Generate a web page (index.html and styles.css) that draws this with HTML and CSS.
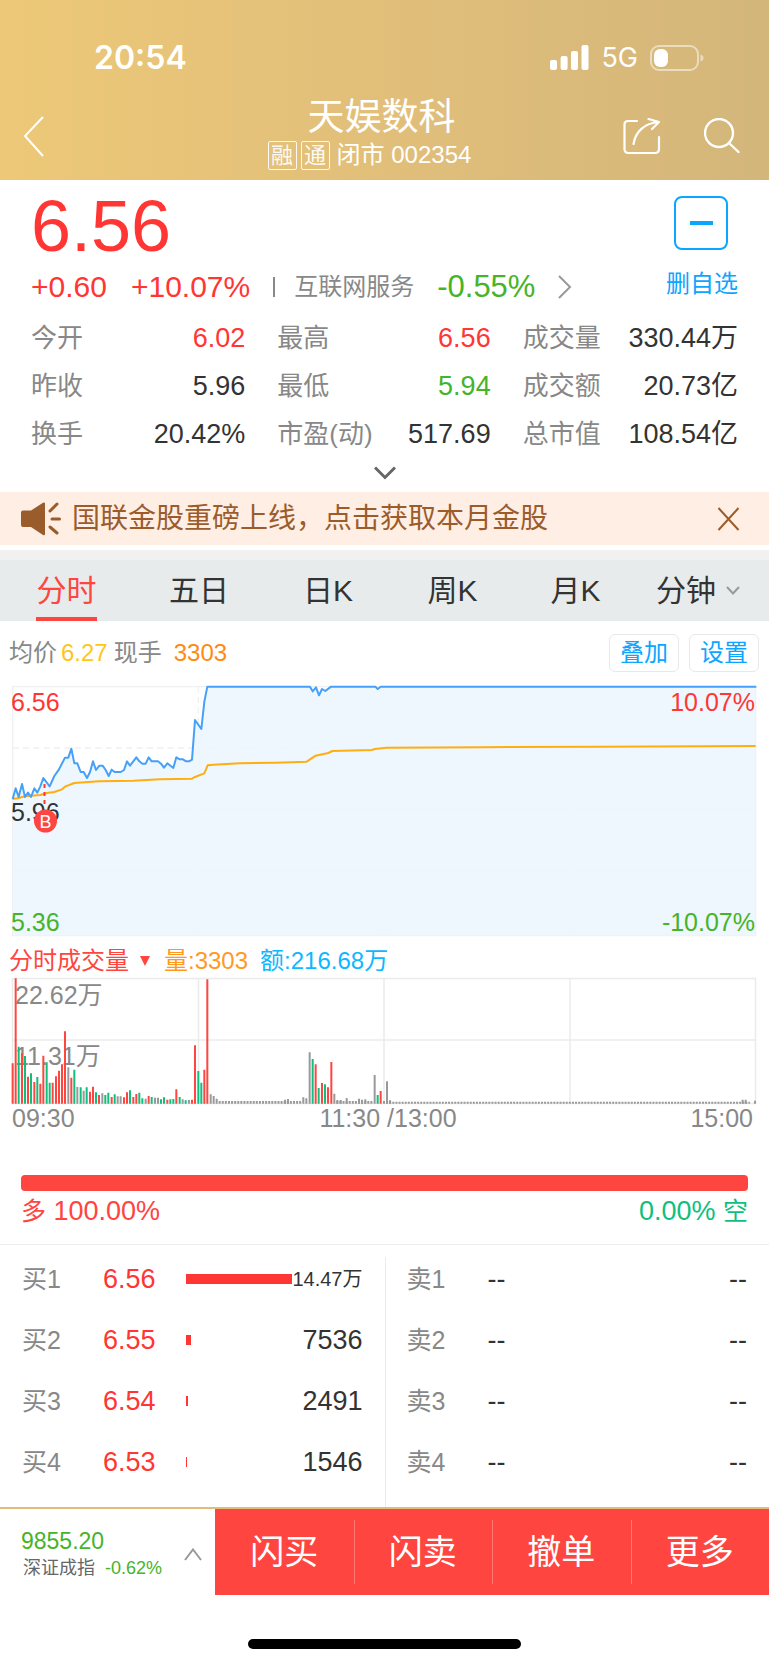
FILE: index.html
```html
<!DOCTYPE html>
<html lang="zh-CN">
<head>
<meta charset="utf-8">
<meta name="viewport" content="width=device-width, initial-scale=1">
<title>天娱数科 002354</title>
<link rel="stylesheet" href="styles.css">
</head>
<body>
<header class="header">
  <div class="status">
    <span class="clock">20:54</span>
    <div class="status-right">
      <svg class="signal" viewBox="0 0 39 25" fill="#fff"><rect y="15" width="7" height="10" rx="2"/><rect x="10.600" y="11" width="7" height="14" rx="2"/><rect x="21" y="6" width="7" height="19" rx="2"/><rect x="31.500" width="7" height="25" rx="2"/></svg>
      <span class="net">5G</span>
      <svg class="battery" viewBox="0 0 54 26"><rect x="1" y="1" width="47" height="24" rx="8" fill="none" stroke="#fff" stroke-opacity=".5" stroke-width="2"/><rect x="4" y="4" width="14" height="18" rx="6" fill="#fff"/><path d="M50.500 9.500q3 1 3 3.500t-3 3.500z" fill="#fff" fill-opacity=".5"/></svg>
    </div>
  </div>
  <div class="nav">
    <button class="icon-btn back" aria-label="返回"><svg width="22" height="42" viewBox="0 0 22 42" fill="none" stroke="#fff" stroke-width="2"><path d="M20 1 2 20l18 20"/></svg></button>
    <div class="title">
      <h1>天娱数科</h1>
      <p><span class="tag">融</span><span class="tag">通</span><span class="market">闭市 002354</span></p>
    </div>
    <div class="nav-right">
      <button class="icon-btn" aria-label="分享"><svg width="38" height="38" viewBox="0 0 38 38" fill="none" stroke="#fff" stroke-width="2.200" stroke-linecap="round" stroke-linejoin="round"><path d="M14 3H5Q1.500 3 1.500 6.500V31q0 4 4 4H32q4 0 4-4V19"/><path d="M10.500 26C12.500 14 21 5 36 4M25.500 1L36 4l-7 7"/></svg></button>
      <button class="icon-btn" aria-label="搜索"><svg width="36" height="38" viewBox="0 0 36 38" fill="none" stroke="#fff" stroke-width="2.400" stroke-linecap="round"><circle cx="15" cy="15" r="14"/><path d="M25 25l9.500 9"/></svg></button>
    </div>
  </div>
</header>

<main>
<section class="quote">
  <div class="quote-top">
    <div>
      <div class="price">6.56</div>
      <div class="change">
        <span>+0.60</span><span class="pct">+10.07%</span><i class="sep"></i>
        <a href="#sector" class="sector"><span class="sector-name">互联网服务</span><span class="down">-0.55%</span><svg width="14" height="24" viewBox="0 0 14 24" fill="none" stroke="#999" stroke-width="2"><path d="M1 1l11 11L1 23"/></svg></a>
      </div>
    </div>
    <button class="fav"><span class="fav-box"></span><span>删自选</span></button>
  </div>
  <dl class="stats">
    <div><dt>今开</dt><dd class="up">6.02</dd></div>
    <div><dt>最高</dt><dd class="up">6.56</dd></div>
    <div><dt>成交量</dt><dd>330.44万</dd></div>
    <div><dt>昨收</dt><dd>5.96</dd></div>
    <div><dt>最低</dt><dd class="down">5.94</dd></div>
    <div><dt>成交额</dt><dd>20.73亿</dd></div>
    <div><dt>换手</dt><dd>20.42%</dd></div>
    <div><dt>市盈(动)</dt><dd>517.69</dd></div>
    <div><dt>总市值</dt><dd>108.54亿</dd></div>
  </dl>
  <button class="expand" aria-label="展开"><svg width="22" height="14" viewBox="0 0 22 14" fill="none" stroke="#666" stroke-width="3"><path d="M1 1.500l10 10 10-10"/></svg></button>
</section>

<div class="banner">
  <svg width="40" height="34" viewBox="0 0 40 34"><path d="M0 10.500q0-2 2-2h8L22 .8q2-1 2 1V32q0 2-2 1L10 25H2q-2 0-2-2z" fill="#9b5c2c"/><path d="M29 9l7-7M31 17h7.500M29 25l7 6" stroke="#9b5c2c" stroke-width="3" stroke-linecap="round" fill="none"/></svg>
  <a href="#promo">国联金股重磅上线，点击获取本月金股</a>
  <button class="icon-btn" aria-label="关闭"><svg width="24" height="24" viewBox="0 0 24 24" fill="none" stroke="#9b5c2c" stroke-width="2"><path d="M1.500 1l20 22M21.500 1l-20 22"/></svg></button>
</div>

<nav class="tabs">
  <button class="active">分时</button><button>五日</button><button>日K</button><button>周K</button><button>月K</button><button class="more">分钟<svg width="14" height="9" viewBox="0 0 14 9" fill="none" stroke="#999" stroke-width="2"><path d="M1 1l6 6.500L13 1"/></svg></button>
</nav>

<div class="info">
  <span>均价</span><span class="avg">6.27</span><span>现手</span><span class="now">3303</span>
  <div class="tools"><button>叠加</button><button>设置</button></div>
</div>

<svg class="chart" viewBox="0 0 769 259" role="img" aria-label="分时走势">
  <g transform="scale(.33333)" fill="none">
    <g stroke="#f0f0f0" stroke-width="4">
      <path d="M38 20H2267V767H38z"/>
      <path d="M38 204H2267M595 20V767M1709 20V767" stroke-dasharray="18 13"/>
      <path d="M38 387H2267M38 571H2267M1152 20V767"/>
    </g>
    <path fill="#ebf5fe" fill-opacity=".85" d="M38 357L47 325 56 351 66 312 75 351 84 338 93 351 103 325 112 338 121 319 130 294 149 319 163 288 177 268 195 233H205L214 206 223 250H232L242 276H251L261 294 270 276 279 244 288 270 298 257H308L317 270 326 288 335 269 344 276H362L372 270 381 244 390 257 409 232 418 244 427 251H437L446 232 455 244H474L483 251 492 263 502 250 520 264 529 232 539 238H549L558 244H567L576 239 585 120 604 147 613 65 622 20H930L938 34 948 22 957 46 966 27 976 33 993 20H1126L1133 27 1142 20H2267V767H38z"/>
    <path stroke="#ffae12" stroke-width="6" stroke-linejoin="round" d="M38 357L56 354 75 349 121 345 140 339 163 336 186 328 195 320 223 309 298 304 400 302 480 298 576 296 585 291 613 280 623 256 640 254 720 250 830 248 920 245 947 227 985 219 997 213 1115 210 1125 207 1160 203 1450 201.500 1810 200 2267 198"/>
    <path stroke="#47a0f7" stroke-width="6" stroke-linejoin="round" d="M38 357L47 325 56 351 66 312 75 351 84 338 93 351 103 325 112 338 121 319 130 294 149 319 163 288 177 268 195 233H205L214 206 223 250H232L242 276H251L261 294 270 276 279 244 288 270 298 257H308L317 270 326 288 335 269 344 276H362L372 270 381 244 390 257 409 232 418 244 427 251H437L446 232 455 244H474L483 251 492 263 502 250 520 264 529 232 539 238H549L558 244H567L576 239 585 120 604 147 613 65 622 20H930L938 34 948 22 957 46 966 27 976 33 993 20H1126L1133 27 1142 20H2269"/>
  </g>
  <g class="labels">
    <text x="11" y="31" class="t-up">6.56</text><text x="11" y="141" class="t-dark">5.96</text><text x="11" y="251" class="t-down">5.36</text>
    <text x="755" y="31" class="t-up end">10.07%</text><text x="755" y="251" class="t-down end">-10.07%</text>
  </g>
  <path d="M44.500 104v22" stroke="#ff3633" stroke-width="2" stroke-dasharray="4 4"/>
  <circle cx="45.500" cy="141" r="11.500" fill="#ff4540"/>
  <text x="45.500" y="148" class="buy-mark">B</text>
</svg>

<div class="vol-head"><button class="vol-name">分时成交量<svg width="10" height="10" viewBox="0 0 10 10"><path d="M0 0h10L5 10z" fill="#ff4540"/></svg></button><span class="vol">量:3303</span><span class="amt">额:216.68万</span></div>

<svg class="chart" viewBox="0 0 769 160" role="img" aria-label="分时成交量">
  <path d="M12.500 4.500h743v125h-743zM12.500 66h743M198.500 4.500v125M384 4.500v125M570 4.500v125" fill="none" stroke="#ebebeb" stroke-width="1.500"/>
  <g class="labels">
    <text x="15" y="30">22.62万</text><text x="15" y="91">11.31万</text>
    <text x="12" y="153">09:30</text><text x="388" y="153" class="mid">11:30 /13:00</text><text x="753" y="153" class="end">15:00</text>
  </g>
  <g transform="translate(0 -34) scale(.33333)" fill="none" stroke-width="6">
    <path stroke="#ff4540" d="M38 491V370M47 491V115M66 491V340M84 491V410M103 491V426M121 491V431M130 491V347M158 491V428M168 491V409M177 491V392M186 491V373M195 491V274M214 491V413M270 491V455M279 491V440M297 491V465M335 491V471M372 491V472M381 491V457M400 491V471M409 491V462M446 491V468M502 491V479M529 491V448M576 491V479M585 491V316M613 491V389M622 491V118M947 491V373M966 491V429M984 491V442M994 491V366M1142 491V453"/>
    <path stroke="#10bf7d" d="M56 491V320M75 491V348M93 491V400M112 491V411M140 491V367M149 491V428M223 491V389M242 491V442M260 491V442M288 491V457M316 491V465M325 491V458M344 491V463M390 491V451M418 491V458M427 491V475M455 491V471M483 491V478M492 491V472M511 491V478M520 491V477M539 491V471M557 491V481M595 491V393M604 491V428M938 491V357M956 491V444M975 491V433M1133 491V465"/>
    <path stroke="#999" d="M205 491V382M232 491V441M251 491V452M307 491V460M353 491V469M362 491V469M437 491V476M465 491V473M474 491V473M548 491V478M567 491V480M632 491V463M641 491V468M650 491V476M855 491V479M864 491V477M910 491V472M919 491V475M929 491V337M1003 491V461M1012 491V480M1022 491V480M1040 491V474M1077 491V476M1086 491V479M1096 491V478M1124 491V405M1161 491V424M1170 491V481M2228 491V479M2237 491V479M2265 491V482"/>
    <path stroke="#999" stroke-width="8" stroke-dasharray="6 3.290" d="M656 487H905M1009 487H1118M1149 487H1176"/>
    <path stroke="#999" stroke-dasharray="6 3.290" d="M1177 488H2250"/>
  </g>
</svg>

<section class="power">
  <div class="power-bar"></div>
  <div class="power-text"><span><b>多</b> 100.00%</span><span class="short">0.00% <b>空</b></span></div>
</section>

<section class="book">
  <table>
    <tr><th scope="row">买1</th><td class="up">6.56</td><td><div class="depth"><i style="width:60%"></i><span class="small">14.47万</span></div></td></tr>
    <tr><th scope="row">买2</th><td class="up">6.55</td><td><div class="depth"><i style="width:3%"></i><span>7536</span></div></td></tr>
    <tr><th scope="row">买3</th><td class="up">6.54</td><td><div class="depth"><i style="width:1%"></i><span>2491</span></div></td></tr>
    <tr><th scope="row">买4</th><td class="up">6.53</td><td><div class="depth"><i style="width:0.6%"></i><span>1546</span></div></td></tr>
  </table>
  <table>
    <tr><th scope="row">卖1</th><td>--</td><td class="qty">--</td></tr>
    <tr><th scope="row">卖2</th><td>--</td><td class="qty">--</td></tr>
    <tr><th scope="row">卖3</th><td>--</td><td class="qty">--</td></tr>
    <tr><th scope="row">卖4</th><td>--</td><td class="qty">--</td></tr>
  </table>
</section>
</main>

<footer>
  <div class="dock">
    <button class="index">
      <span class="index-text"><span class="index-value">9855.20</span><span class="index-sub"><span>深证成指</span><span class="down">-0.62%</span></span></span>
      <svg width="18" height="13" viewBox="0 0 18 13" fill="none" stroke="#999" stroke-width="2"><path d="M1 12L9 1.500 17 12"/></svg>
    </button>
    <div class="actions"><button>闪买</button><button>闪卖</button><button>撤单</button><button>更多</button></div>
  </div>
  <div class="home"></div>
</footer>
</body>
</html>
```
FILE: styles.css
```css
* { box-sizing: border-box; }
body {
  margin: 0;
  background: #fff;
  color: #333;
  font-family: "Liberation Sans", "Noto Sans CJK SC", sans-serif;
  font-size: 24px;
  line-height: 1;
}
button { margin: 0; padding: 0; border: 0; background: none; color: inherit; font: inherit; cursor: pointer; }
a { color: inherit; text-decoration: none; }
svg { display: block; flex: none; }
.up { color: #ff3633; }
.down { color: #46b428; }
.icon-btn { display: flex; }

.header { background: linear-gradient(90deg, #edc878, #e0be7a 55%, #d3b67a); color: #fff; }
.status { display: flex; justify-content: space-between; align-items: center; height: 94px; padding: 21px 65px 0 94px; }
.clock { font: 600 32px/40px Inter, sans-serif; }
.status-right { display: flex; align-items: center; }
.signal { width: 39px; height: 25px; }
.net { margin: 0 12px; font: 400 27px/32px Inter, sans-serif; }
.battery { width: 54px; height: 26px; }
.nav { display: grid; grid-template-columns: 1fr auto 1fr; height: 86px; padding: 0 29px 0 23px; }
.back { align-self: center; }
.title { text-align: center; }
.title h1 { margin: 0; padding-top: 2px; font-size: 37px; font-weight: 400; line-height: 44px; }
.title p { display: flex; align-items: center; gap: 4px; margin: 0 24px 0 0; line-height: 30px; }
.tag { width: 29px; height: 29px; border: 1px solid #fff; border-radius: 2px; line-height: 27px; font-size: 22px; opacity: .9; }
.market { margin-left: 3px; }
.nav-right { display: flex; align-items: center; justify-content: flex-end; gap: 43px; }

.quote { padding: 11px 31px 0; }
.quote-top { display: flex; justify-content: space-between; }
.price { color: #ff3633; font-size: 72px; line-height: 72px; margin-top: -1px; }
.change { display: flex; align-items: center; margin-top: 5px; color: #ff3633; font-size: 30px; line-height: 40px; }
.pct { margin-left: 24px; }
.sep { width: 2px; height: 20px; margin: 0 19px 0 23px; background: #888; }
.sector { display: flex; align-items: center; }
.sector-name { margin-right: 23px; color: #888; font-size: 24px; }
.sector .down { font-size: 31px; }
.sector svg { margin-left: 23px; }
.fav { display: flex; flex-direction: column; align-items: flex-end; color: #0ca5ff; }
.fav-box { display: grid; place-items: center; width: 54px; height: 54px; margin: 5px 10px 22px 0; border: 2px solid #0ca5ff; border-radius: 8px; }
.fav-box::before { content: ""; width: 23px; height: 4px; background: #0ca5ff; }
.stats { display: grid; grid-template-columns: 214fr 213fr 215fr; column-gap: 32px; margin: 7px 0 0; font-size: 26px; line-height: 48px; }
.stats div { display: flex; justify-content: space-between; }
.stats dt { color: #888; white-space: nowrap; }
.stats dd { margin: 0; font-size: 27px; white-space: nowrap; }
.expand { display: flex; width: 100%; height: 34px; padding-top: 8px; justify-content: center; }

.banner { display: flex; align-items: center; height: 53px; padding: 0 28px 0 21px; background: #ffeee4; color: #9b5c2c; font-size: 28px; }
.banner a { flex: 1; margin-left: 11px; line-height: 32px; }

.tabs { display: grid; grid-template-columns: 133fr 132fr 126fr 123fr 123fr 132fr; height: 71px; margin-top: 5px; border-top: 10px solid #f1f1f1; background: #e8ebec; font-size: 30px; }
.tabs button { display: flex; align-items: center; justify-content: center; height: 61px; line-height: 61px; white-space: nowrap; }
.tabs .active { width: 61px; justify-self: center; border-bottom: 4px solid #ff4540; border-top: 4px solid transparent; color: #ff4540; }
.tabs .more { padding-right: 10px; gap: 10px; }

.info { display: flex; align-items: center; height: 59px; padding: 4px 10px 0 9px; color: #888; }
.avg { margin: 0 6px 0 4px; color: #ffc61a; }
.now { margin-left: 12px; color: #ff8a12; }
.tools { display: flex; gap: 10px; margin-left: auto; }
.tools button { width: 70px; height: 38px; border: 1px solid #e8e8e8; border-radius: 6px; color: #0ca5ff; }

.chart { width: 100%; height: auto; }
.labels { font-size: 25px; fill: #888; }
.t-up { fill: #ff3633; }
.t-down { fill: #46b428; }
.t-dark { fill: #333; }
.end { text-anchor: end; }
.mid { text-anchor: middle; }
.buy-mark { fill: #fff; font-size: 18px; text-anchor: middle; }

.vol-head { display: flex; align-items: center; height: 35px; padding: 9px 9px 0; white-space: nowrap; }
.vol-name { display: flex; align-items: center; gap: 11px; color: #ff4540; }
.vol { margin: 0 12px 0 14px; color: #ff9a1e; }
.amt { color: #0cb8ff; }

.power { padding: 41px 21px 17px; border-bottom: 1px solid #eee; }
.power-bar { height: 16px; border-radius: 4px; background: #ff4540; }
.power-text { display: flex; justify-content: space-between; margin-top: 4px; color: #ff4540; font-size: 27px; line-height: 32px; }
.power-text b { font-size: 25px; font-weight: 400; }
.short { color: #10bf7d; }

.book { display: grid; grid-template-columns: 1fr 1fr; padding: 3px 0 15px; position: relative; }
.book::after { content: ""; position: absolute; left: 50%; top: 12px; bottom: 0; width: 1px; background: #ebebeb; }
.book table { width: 100%; border-collapse: separate; border-spacing: 0; table-layout: fixed; padding: 0 22px; font-size: 27px; }
.book tr { height: 61px; }
.book th, .book td { padding: 0; font-weight: 400; text-align: left; line-height: 36px; }
.book th { width: 81px; color: #888; font-size: 25px; }
.book td:nth-child(2) { width: 83px; }
.book .qty { text-align: right; }
.depth { display: flex; align-items: center; justify-content: space-between; }
.depth i { height: 10px; background: #ff3633; }
.small { font-size: 20px; }

.dock { display: grid; grid-template-columns: 215fr 554fr; height: 88px; border-top: 2px solid #e0be7a; }
.index { display: flex; align-items: center; justify-content: space-between; padding: 4px 13px 0 21px; text-align: left; }
.index-text { display: flex; flex-direction: column; }
.index-value { color: #46b428; font-size: 23px; line-height: 28px; }
.index-sub { display: flex; gap: 10px; padding-left: 2px; color: #666; font-size: 18px; line-height: 26px; white-space: nowrap; }
.actions { display: grid; grid-template-columns: repeat(4, 1fr); background: #ff4540; color: #fff; font-size: 34px; }
.actions button + button { background: linear-gradient(#ff7a75, #ff7a75) left center / 1px 64px no-repeat; }
.home { height: 10px; width: 273px; margin: 44px auto 16px; border-radius: 5px; background: #000; }
```
